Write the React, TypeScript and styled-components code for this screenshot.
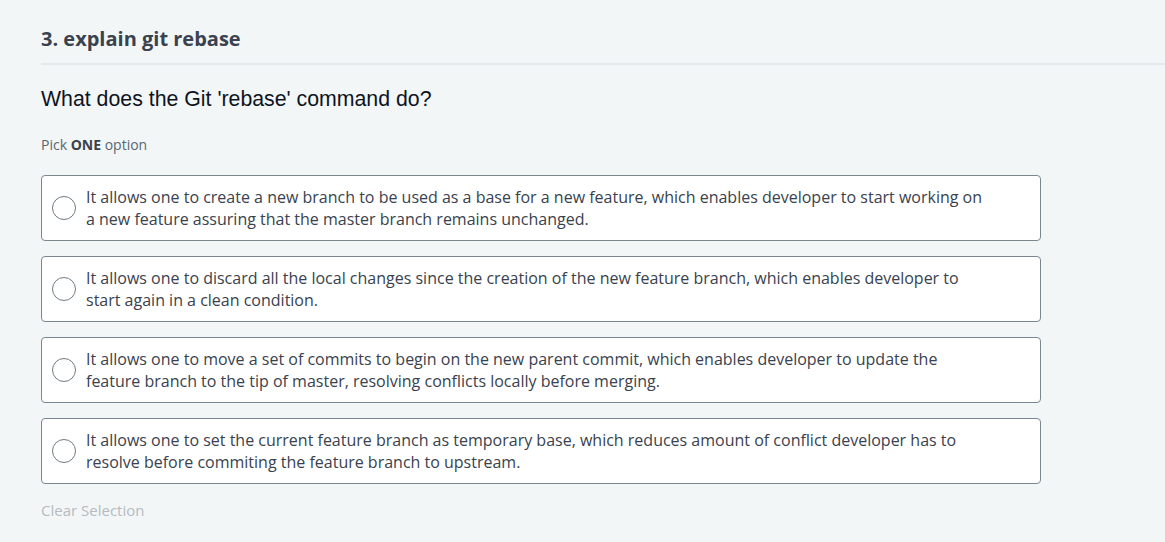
import React from "react";
import styled, { createGlobalStyle } from "styled-components";

const Global = createGlobalStyle`
  html, body { margin: 0; padding: 0; background: #f3f6f7; }
  body { font-family: "Open Sans", "Liberation Sans", sans-serif; }
`;

const Page = styled.div`
  min-height: 542px;
  box-sizing: border-box;
  padding-left: 41px;
  border-left: 2px solid #eceff1;
  margin-left: -2px;
  background: #f3f6f7;
`;

const Header = styled.div`
  padding-top: 25px;
  padding-bottom: 10px;
  border-bottom: 2px solid #e5e9eb;
`;

const Title = styled.h1`
  margin: 0;
  font-family: "Open Sans", sans-serif;
  font-weight: 700;
  font-size: 20px;
  line-height: 28px;
  color: #39424e;
`;

const Question = styled.p`
  margin: 20px 0 0;
  font-family: "Liberation Sans", Arial, sans-serif;
  font-size: 21.3px;
  line-height: 28px;
  color: #0e141e;
`;

const Hint = styled.p`
  margin: 22px 0 0;
  font-size: 14px;
  line-height: 20px;
  color: #576871;
  b { color: #39424e; font-weight: 700; }
`;

const Options = styled.div`
  margin-top: 20px;
  width: 1000px;
  display: flex;
  flex-direction: column;
  gap: 15px;
`;

const Option = styled.label`
  box-sizing: border-box;
  height: 66px;
  display: flex;
  align-items: center;
  gap: 10px;
  padding: 0 50px 0 10px;
  background: #ffffff;
  border: 1px solid #7b8790;
  border-radius: 4px;
  cursor: pointer;
`;

const Radio = styled.span`
  flex: none;
  box-sizing: border-box;
  width: 24px;
  height: 24px;
  border-radius: 50%;
  border: 1px solid #6f7a83;
  background: #fff;
`;

const OptionText = styled.span`
  font-size: 16px;
  line-height: 22px;
  color: #39424e;
`;

const Clear = styled.div`
  margin-top: 16px;
  font-size: 15px;
  line-height: 20px;
  color: #b4bcc1;
`;

const options = [
  "It allows one to create a new branch to be used as a base for a new feature, which enables developer to start working on a new feature assuring that the master branch remains unchanged.",
  "It allows one to discard all the local changes since the creation of the new feature branch, which enables developer to start again in a clean condition.",
  "It allows one to move a set of commits to begin on the new parent commit, which enables developer to update the feature branch to the tip of master, resolving conflicts locally before merging.",
  "It allows one to set the current feature branch as temporary base, which reduces amount of conflict developer has to resolve before commiting the feature branch to upstream.",
];

export default function App() {
  return (
    <>
      <Global />
      <Page>
        <Header>
          <Title>3. explain git rebase</Title>
        </Header>
        <Question>What does the Git 'rebase' command do?</Question>
        <Hint>
          Pick <b>ONE</b> option
        </Hint>
        <Options>
          {options.map((o) => (
            <Option key={o}>
              <Radio />
              <OptionText>{o}</OptionText>
            </Option>
          ))}
        </Options>
        <Clear>Clear Selection</Clear>
      </Page>
    </>
  );
}
